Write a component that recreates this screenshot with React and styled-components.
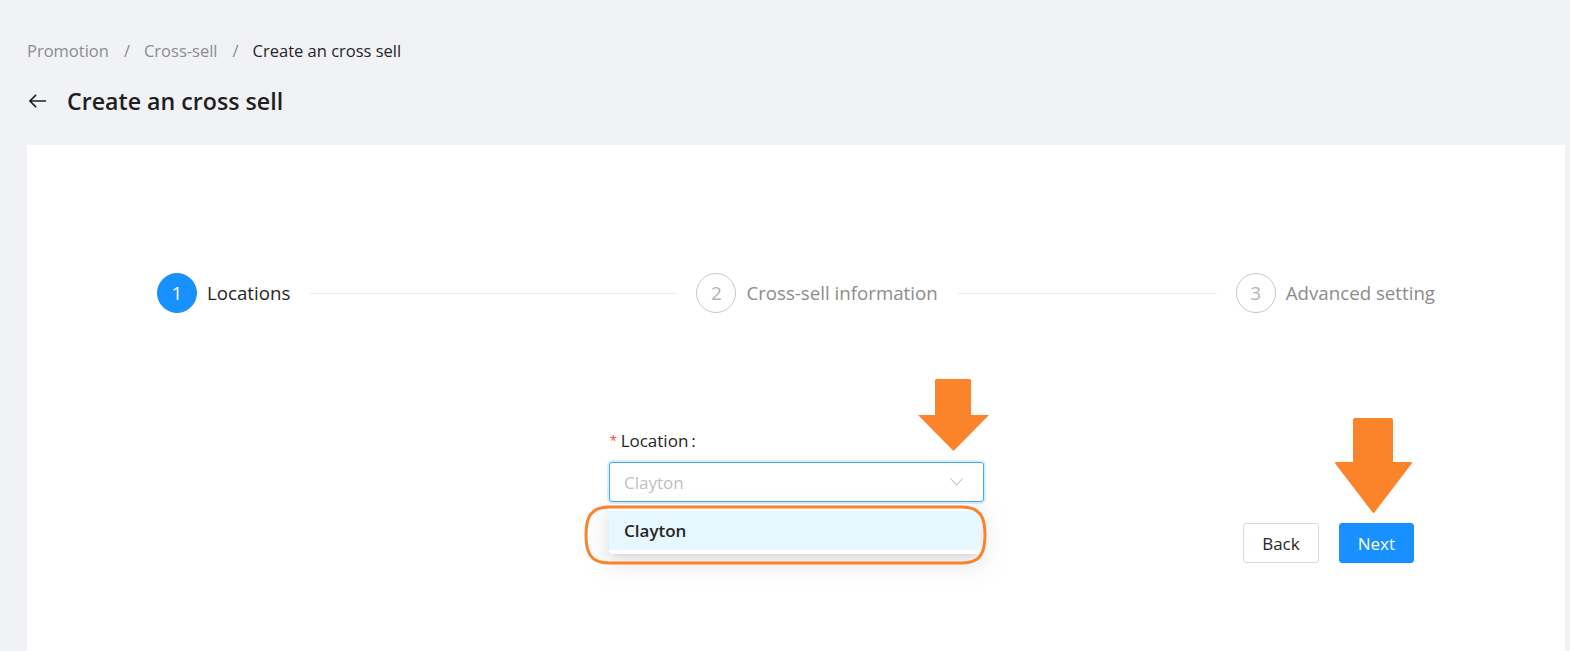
import styled, { createGlobalStyle } from "styled-components";

const GlobalStyle = createGlobalStyle`
  body {
    margin: 0;
    background: #f0f2f5;
    font-family: "Open Sans", "Noto Sans", sans-serif;
    color: rgba(0, 0, 0, 0.85);
  }
`;

const steps = [
  { num: 1, title: "Locations" },
  { num: 2, title: "Cross-sell information" },
  { num: 3, title: "Advanced setting" },
];

const App = () => {
  const current = 1;

  return (
    <Page>
      <GlobalStyle />
      <Header>
        <Breadcrumb>
          <Crumb>Promotion</Crumb>
          <Separator>/</Separator>
          <Crumb>Cross-sell</Crumb>
          <Separator>/</Separator>
          <Crumb $active>Create an cross sell</Crumb>
        </Breadcrumb>
        <TitleRow>
          <BackIcon viewBox="0 0 20 16" width="19" height="16">
            <path
              d="M19 8H2M8.5 1.5L2 8l6.5 6.5"
              fill="none"
              stroke="#1f1f1f"
              strokeWidth="1.7"
            />
          </BackIcon>
          <Title>Create an cross sell</Title>
        </TitleRow>
      </Header>

      <Card>
        <Steps>
          {steps.map((s, i) => (
            <Step key={s.num} $last={i === steps.length - 1}>
              <StepIcon $active={s.num === current}>{s.num}</StepIcon>
              <StepTitle $active={s.num === current}>{s.title}</StepTitle>
              {i < steps.length - 1 && <StepLine />}
            </Step>
          ))}
        </Steps>

        <FormBody>
          <Field>
            <Label>
              <Required>*</Required>
              Location<Colon>:</Colon>
            </Label>
            <SelectBox>
              <Placeholder>Clayton</Placeholder>
              <svg width="13" height="8" viewBox="0 0 13 8">
                <path d="M0.5 0.5L6.5 7l6-6.5" fill="none" stroke="#bfbfbf" strokeWidth="1.1" />
              </svg>
              <Dropdown>
                <Option $selected>Clayton</Option>
              </Dropdown>
            </SelectBox>
          </Field>
          <Actions>
            <Button>Back</Button>
            <Button $primary>Next</Button>
          </Actions>
        </FormBody>

        <ArrowMark viewBox="0 0 71 72" width="71" height="72" $left={891} $top={234}>
          <rect x="17" y="0" width="36" height="37" rx="1.5" fill="#fb832a" />
          <polygon points="0,36 71,36 35.5,72" fill="#fb832a" strokeLinejoin="round" />
        </ArrowMark>
        <ArrowMark viewBox="0 0 77 95" width="77" height="95" $left={1308} $top={273}>
          <rect x="18" y="0" width="40" height="46" rx="2" fill="#fb832a" />
          <polygon
            points="1,45 76,45 38.5,94"
            fill="#fb832a"
            stroke="#fb832a"
            strokeWidth="2"
            strokeLinejoin="round"
          />
        </ArrowMark>
        <Highlight viewBox="0 0 405 62" width="405" height="62">
          <path
            d="M26 3 H379 C398 3 402 14 402 31 C402 48 398 59 379 59 H26 C7 59 3 48 3 31 C3 14 7 3 26 3 Z"
            fill="none"
            stroke="#f7832d"
            strokeWidth="3"
          />
        </Highlight>
      </Card>
    </Page>
  );
};

const Page = styled.div`
  min-height: 651px;
  display: flex;
  flex-direction: column;
`;

const Header = styled.div`
  padding: 38px 27px 0;
  display: flex;
  flex-direction: column;
  gap: 21px;
`;

const Breadcrumb = styled.div`
  display: flex;
  align-items: center;
  font-size: 16.5px;
  line-height: 26px;
`;

const Crumb = styled.span`
  color: ${(p) => (p.$active ? "#262626" : "#8c8c8c")};
`;

const Separator = styled.span`
  margin: 0 14px 0 15px;
  color: #8c8c8c;
`;

const TitleRow = styled.div`
  display: flex;
  align-items: center;
  gap: 20px;
  height: 32px;
  padding-left: 1px;
`;

const BackIcon = styled.svg`
  display: block;
  flex-shrink: 0;
`;

const Title = styled.h1`
  margin: 0;
  font-size: 23.2px;
  font-weight: 600;
  color: #1f1f1f;
  line-height: 32px;
`;

const Card = styled.div`
  position: relative;
  flex: 1;
  margin: 28px 5px 0 27px;
  background: #fff;
  padding: 128px 130px 80px;
`;

const Steps = styled.div`
  display: flex;
  align-items: center;
`;

const Step = styled.div`
  display: flex;
  align-items: center;
  flex: ${(p) => (p.$last ? "none" : "1")};
`;

const StepIcon = styled.div`
  width: 40px;
  height: 40px;
  box-sizing: border-box;
  border-radius: 50%;
  display: flex;
  align-items: center;
  justify-content: center;
  flex-shrink: 0;
  font-size: 19px;
  background: ${(p) => (p.$active ? "#1890ff" : "#fff")};
  border: 1px solid ${(p) => (p.$active ? "#1890ff" : "#c8c8c8")};
  color: ${(p) => (p.$active ? "#fff" : "#b3b3b3")};
`;

const StepTitle = styled.div`
  margin-left: 10px;
  font-size: 18.7px;
  line-height: 40px;
  white-space: nowrap;
  color: ${(p) => (p.$active ? "#262626" : "#8c8c8c")};
`;

const StepLine = styled.div`
  flex: 1;
  height: 1px;
  background: #ececec;
  margin: 0 19px 0 20px;
`;

const FormBody = styled.div`
  display: grid;
  grid-template-columns: 1fr 375px 1fr;
  margin-top: 116px;
  padding-left: 1px;
`;

const Field = styled.div`
  grid-column: 2;
  grid-row: 1;
  display: flex;
  flex-direction: column;
  gap: 8px;
`;

const Label = styled.label`
  font-size: 17px;
  line-height: 24px;
  color: #262626;
  padding-left: 1px;
`;

const Required = styled.span`
  color: #ff4d4f;
  margin-right: 4px;
  font-family: "Liberation Sans", sans-serif;
`;

const Colon = styled.span`
  margin-left: 3px;
`;

const SelectBox = styled.div`
  position: relative;
  height: 40px;
  box-sizing: border-box;
  border: 1px solid #40a9ff;
  border-radius: 3px;
  box-shadow: 0 0 0 2px rgba(24, 144, 255, 0.15);
  display: flex;
  align-items: center;
  justify-content: space-between;
  padding: 0 20px 0 14px;
  background: #fff;
`;

const Placeholder = styled.span`
  font-size: 17px;
  color: #bfbfbf;
`;

const Dropdown = styled.div`
  position: absolute;
  top: calc(100% + 6px);
  left: -1px;
  width: 372px;
  padding: 4px 0;
  background: #fff;
  border-radius: 3px;
  box-shadow: 0 3px 6px -4px rgba(0, 0, 0, 0.12), 0 6px 16px 0 rgba(0, 0, 0, 0.08),
    0 9px 28px 8px rgba(0, 0, 0, 0.05);
`;

const Option = styled.div`
  height: 39px;
  display: flex;
  align-items: center;
  padding: 0 15px;
  font-size: 17px;
  font-weight: 600;
  color: #262626;
  background: ${(p) => (p.$selected ? "#e6f7ff" : "#fff")};
`;

const Actions = styled.div`
  grid-column: 3;
  grid-row: 2;
  display: flex;
  justify-content: flex-end;
  gap: 20px;
  margin-top: 21px;
  padding-right: 21px;
`;

const Button = styled.button`
  height: 40px;
  min-width: 75px;
  padding: 0 18px;
  border-radius: 3px;
  font-family: inherit;
  font-size: 17px;
  cursor: pointer;
  border: 1px solid ${(p) => (p.$primary ? "#1890ff" : "#d9d9d9")};
  background: ${(p) => (p.$primary ? "#1890ff" : "#fff")};
  color: ${(p) => (p.$primary ? "#fff" : "#262626")};
`;

const ArrowMark = styled.svg`
  position: absolute;
  left: ${(p) => p.$left}px;
  top: ${(p) => p.$top}px;
`;

const Highlight = styled.svg`
  position: absolute;
  left: 556px;
  top: 359px;
`;

export default App;
